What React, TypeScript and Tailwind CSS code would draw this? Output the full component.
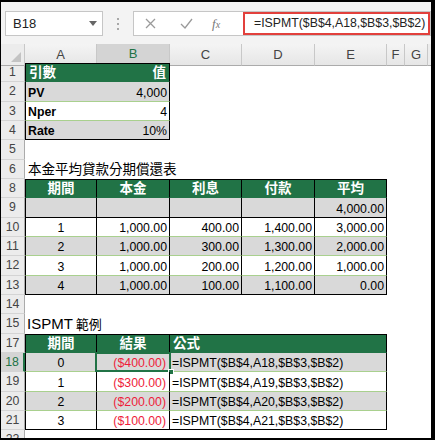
import React from "react";

const FONT = "font-['Liberation_Sans','Noto_Sans_CJK_TC',sans-serif]";
const COLS = "grid grid-cols-[24px_72px_73px_72px_73px_72px_18px_23px_1fr]";
const ROW_H = ["h-[19px]", "h-[20px]", "h-[19px]"];

// every table cell carries a bottom border so text sits the same distance from the row bottom
const CELL = "flex items-end whitespace-nowrap leading-none border-b pb-[2px]";
const HEAD = `${CELL} border-t border-t-black border-b-[#217346] bg-[#217346] text-[13.5px] font-bold text-white`;
const GRAY = "bg-[#d9d9d9]";
const LINE = "border-b-[#a9d08e]";
const LAST = "border-b-black";
const RED = "text-[#ee1c3a]";

const amort = [
  ["1", "1,000.00", "400.00", "1,400.00", "3,000.00"],
  ["2", "1,000.00", "300.00", "1,300.00", "2,000.00"],
  ["3", "1,000.00", "200.00", "1,200.00", "1,000.00"],
  ["4", "1,000.00", "100.00", "1,100.00", "0.00"],
];

const examples = [
  ["0", "($400.00)", "=ISPMT($B$4,A18,$B$3,$B$2)"],
  ["1", "($300.00)", "=ISPMT($B$4,A19,$B$3,$B$2)"],
  ["2", "($200.00)", "=ISPMT($B$4,A20,$B$3,$B$2)"],
  ["3", "($100.00)", "=ISPMT($B$4,A21,$B$3,$B$2)"],
];

export default function App() {
  return (
    <div
      className={`h-[440px] w-[435px] overflow-hidden border-t-2 border-r-4 border-b-2 border-l border-black bg-white text-[12.3px] text-black ${FONT}`}
    >
      <TopBar />
      <ColumnHeader />

      <Row i={0} num={1}>
        <div className={`${HEAD} border-l border-l-black pl-[3px]`}>引數</div>
        <div className={`${HEAD} justify-end border-r border-r-black pr-[3px]`}>值</div>
      </Row>
      <ParamRow i={1} num={2} label="PV" value="4,000" bg={GRAY} bottom={LINE} />
      <ParamRow i={2} num={3} label="Nper" value="4" bg="bg-white" bottom={LINE} />
      <ParamRow i={3} num={4} label="Rate" value="10%" bg={GRAY} bottom={LAST} />
      <Row i={4} num={5} />
      <Row i={5} num={6}>
        <div className="col-span-6 flex items-end pb-[3px] pl-[3px] text-[13.5px] leading-none whitespace-nowrap">
          本金平均貸款分期償還表
        </div>
      </Row>

      <Row i={6} num={8}>
        <div className={`${HEAD} justify-center border-x border-x-black`}>期間</div>
        <div className={`${HEAD} justify-center border-r border-r-black`}>本金</div>
        <div className={`${HEAD} justify-center border-r border-r-black`}>利息</div>
        <div className={`${HEAD} justify-center border-r border-r-black`}>付款</div>
        <div className={`${HEAD} justify-center border-r border-r-black`}>平均</div>
      </Row>
      <Row i={7} num={9}>
        <div className={`${CELL} ${GRAY} ${LAST} border-x border-x-black`} />
        <div className={`${CELL} ${GRAY} ${LAST} border-r border-r-black`} />
        <div className={`${CELL} ${GRAY} ${LAST} border-r border-r-black`} />
        <div className={`${CELL} ${GRAY} ${LAST} border-r border-r-black`} />
        <div className={`${CELL} ${GRAY} ${LAST} justify-end border-r border-r-black pr-[2px]`}>4,000.00</div>
      </Row>
      {amort.map((r, k) => {
        const bg = k % 2 === 0 ? "bg-white" : GRAY;
        const bottom = k === amort.length - 1 ? LAST : LINE;
        return (
          <Row key={r[0]} i={8 + k} num={10 + k}>
            <div className={`${CELL} ${bg} ${bottom} justify-center border-x border-x-black`}>{r[0]}</div>
            {r.slice(1).map((v, j) => (
              <div key={j} className={`${CELL} ${bg} ${bottom} justify-end border-r border-r-black pr-[2px]`}>
                {v}
              </div>
            ))}
          </Row>
        );
      })}

      <Row i={12} num={14} />
      <Row i={13} num={15}>
        <div className="col-span-6 flex items-end pb-[3px] pl-[2px] leading-none whitespace-nowrap">
          <span className="text-[15px]">ISPMT</span>
          <span className="ml-[3px] text-[13px]">範例</span>
        </div>
      </Row>

      <Row i={14} num={17}>
        <div className={`${HEAD} justify-center border-x border-x-black`}>期間</div>
        <div className={`${HEAD} justify-center border-r border-r-black`}>結果</div>
        <div className={`${HEAD} col-span-3 border-r border-r-black pl-[3px]`}>公式</div>
      </Row>
      {examples.map((r, k) => {
        const bg = k % 2 === 0 ? GRAY : "bg-white";
        const bottom = k === examples.length - 1 ? LAST : LINE;
        return (
          <Row key={r[0]} i={15 + k} num={18 + k} selected={k === 0}>
            <div className={`${CELL} ${bg} ${bottom} justify-center border-x border-x-black`}>{r[0]}</div>
            <div className={`${CELL} ${bg} ${bottom} ${RED} relative justify-end border-r border-r-black pr-[3px]`}>
              {r[1]}
              {k === 0 && (
                <>
                  <span className="absolute -top-px -right-[2px] -bottom-px -left-[2px] border-2 border-[#217346]" />
                  <span className="absolute -right-[5px] -bottom-[4px] h-[6px] w-[6px] border border-white bg-[#217346]" />
                </>
              )}
            </div>
            <div className={`${CELL} ${bg} ${bottom} col-span-3 border-r border-r-black pl-[2px]`}>{r[2]}</div>
          </Row>
        );
      })}
      <Row i={0} num={22} />
    </div>
  );
}

function TopBar() {
  return (
    <div className="flex h-[42px] items-start bg-[#f3f3f3] pt-[9px]">
      <div className="ml-[4px] flex h-[25px] w-[98px] items-center justify-between border border-[#c6c6c6] bg-white pr-[5px] pl-[7px] text-[13px] text-[#222]">
        <span>B18</span>
        <svg width="8" height="5" viewBox="0 0 8 5">
          <path d="M0 0h8L4 5z" fill="#666" />
        </svg>
      </div>
      <div className="flex h-[25px] w-[30px] flex-col items-center justify-center gap-[3px]">
        <span className="h-[2px] w-[2px] bg-[#a8a8a8]" />
        <span className="h-[2px] w-[2px] bg-[#a8a8a8]" />
        <span className="h-[2px] w-[2px] bg-[#a8a8a8]" />
      </div>
      <div className="flex h-[25px] flex-1 border border-[#c6c6c6] bg-white">
        <div className="flex w-[109px] items-center">
          <svg className="ml-[11px]" width="11" height="11" viewBox="0 0 11 11">
            <path d="M1 1l9 9M10 1l-9 9" stroke="#9a9a9a" strokeWidth="1.3" />
          </svg>
          <svg className="ml-[24px]" width="13" height="11" viewBox="0 0 13 11">
            <path d="M1 6l4 4 7-9" fill="none" stroke="#9a9a9a" strokeWidth="1.3" />
          </svg>
          <span className="ml-[19px] font-['Liberation_Serif',serif] text-[13px] text-[#777] italic">
            f<span className="text-[10px]">x</span>
          </span>
        </div>
        <div className="flex flex-1 items-center border-2 border-[#e2403c] pl-[9px] text-[12.3px] whitespace-nowrap text-[#222]">
          =ISPMT($B$4,A18,$B$3,$B$2)
        </div>
      </div>
    </div>
  );
}

function ColumnHeader() {
  const letters = ["A", "B", "C", "D", "E", "F", "G"];
  return (
    <div className={`${COLS} h-[19px] text-[13px] text-[#444]`}>
      <div className="relative border-r border-b border-r-[#c8c8c8] border-b-[#ababab] bg-[#ececec]">
        <svg className="absolute right-[3px] bottom-[3px]" width="10" height="10" viewBox="0 0 10 10">
          <path d="M10 0v10H0z" fill="#c3c3c3" />
        </svg>
      </div>
      {letters.map((l) =>
        l === "B" ? (
          <div
            key={l}
            className="flex items-center justify-center border-r border-b-2 border-r-[#c8c8c8] border-b-[#217346] bg-[#d4d4d4] text-[#217346]"
          >
            {l}
          </div>
        ) : (
          <div
            key={l}
            className="flex items-center justify-center border-r border-b border-r-[#c8c8c8] border-b-[#ababab] bg-linear-to-b from-[#f4f4f4] to-[#e6e6e6]"
          >
            {l}
          </div>
        ),
      )}
      <div className="border-b border-b-[#ababab] bg-[#ececec]" />
    </div>
  );
}

function Row({
  i,
  num,
  selected,
  children,
}: {
  i: number;
  num: number;
  selected?: boolean;
  children?: React.ReactNode;
}) {
  return (
    <div className={`${COLS} ${ROW_H[i % 3]}`}>
      {selected ? (
        <div className="flex items-center justify-center border-r-2 border-b border-r-[#217346] border-b-[#d4d4d4] bg-[#d4d4d4] text-[#217346]">
          {num}
        </div>
      ) : (
        <div className="flex items-center justify-center border-r border-b border-r-[#ababab] border-b-[#d4d4d4] bg-[#ececec] text-[#444]">
          {num}
        </div>
      )}
      {children}
    </div>
  );
}

function ParamRow({
  i,
  num,
  label,
  value,
  bg,
  bottom,
}: {
  i: number;
  num: number;
  label: string;
  value: string;
  bg: string;
  bottom: string;
}) {
  return (
    <Row i={i} num={num}>
      <div className={`${CELL} ${bg} ${bottom} border-l border-l-black pl-[2px] font-bold`}>{label}</div>
      <div className={`${CELL} ${bg} ${bottom} justify-end border-r border-r-black pr-[2px]`}>{value}</div>
    </Row>
  );
}
